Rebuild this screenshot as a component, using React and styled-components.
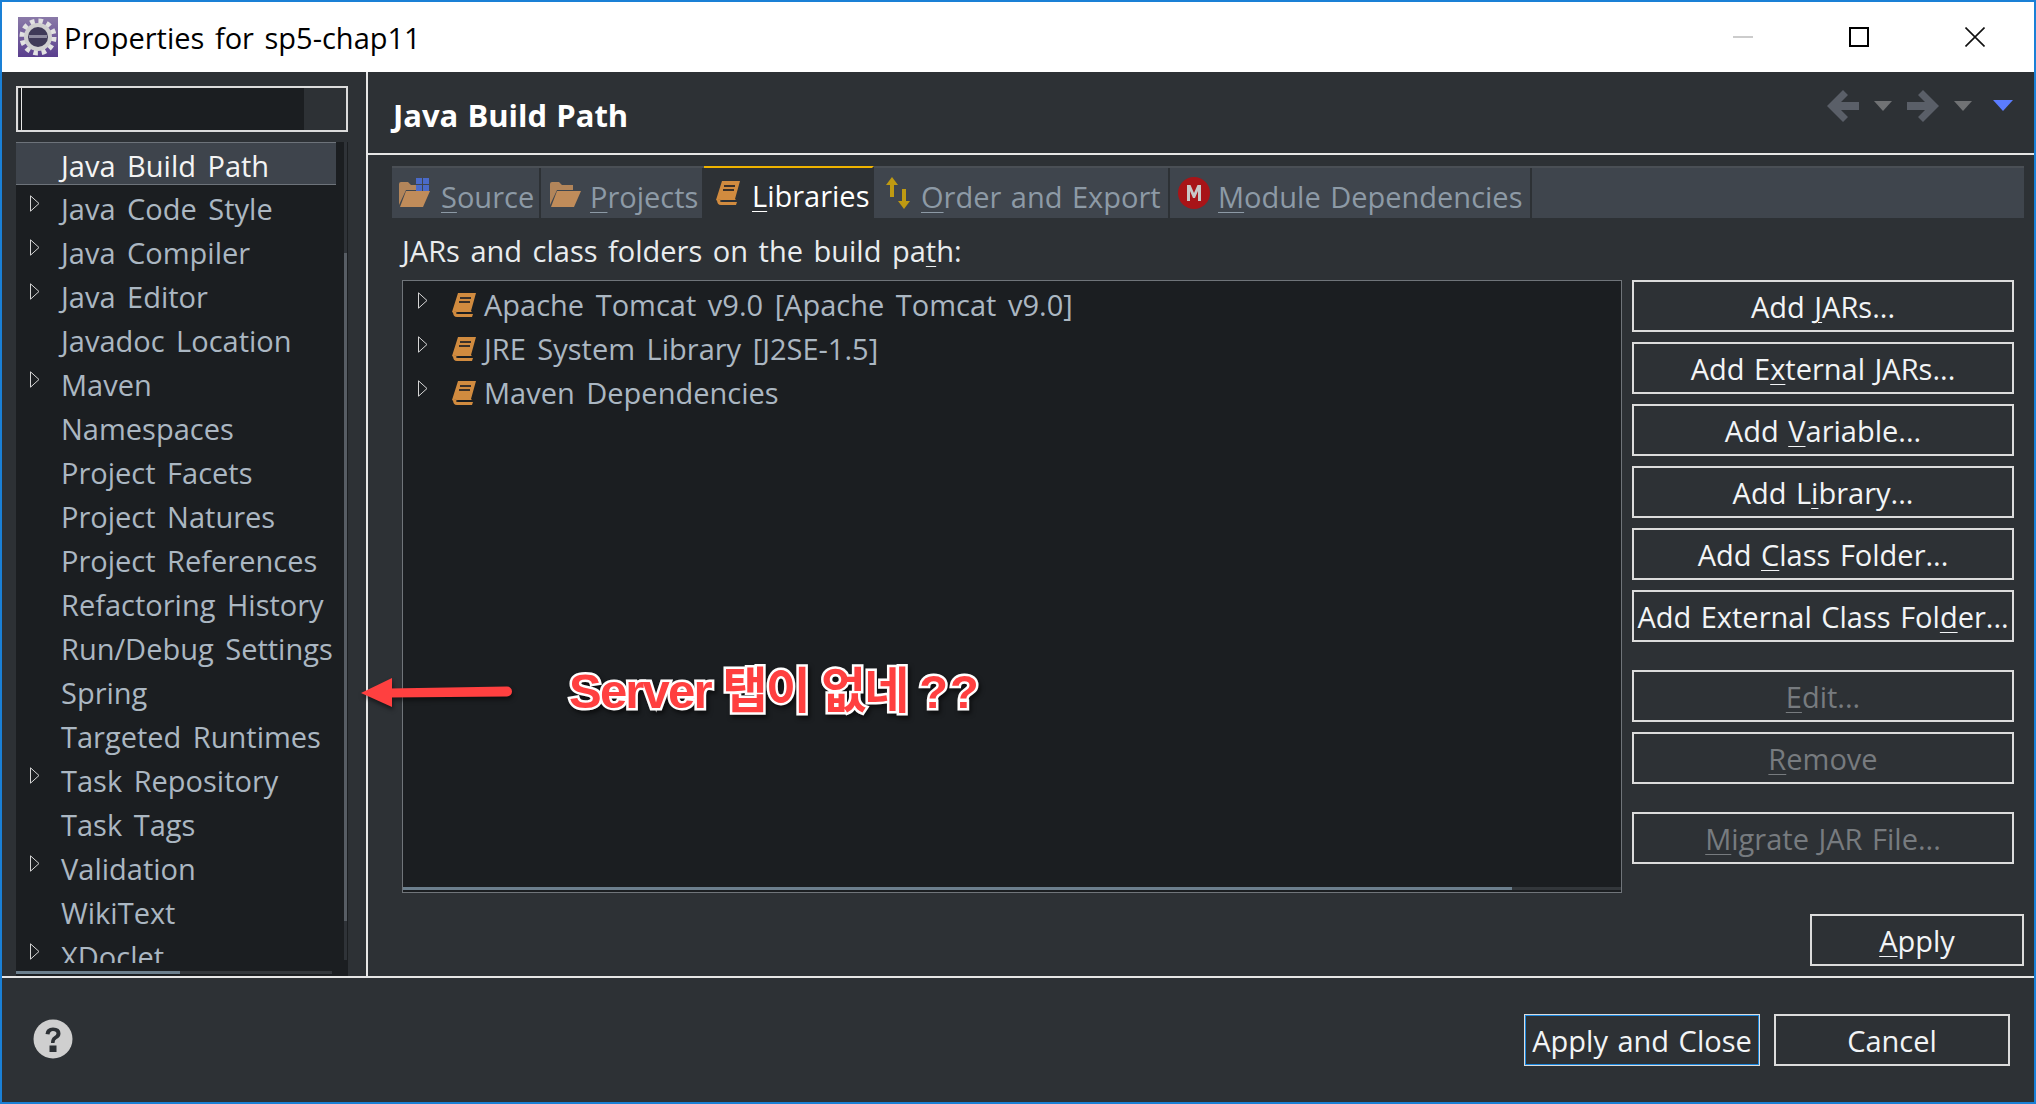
import React from 'react';
import styled, { createGlobalStyle } from 'styled-components';

const GlobalStyle = createGlobalStyle`
  html, body {
    margin: 0;
    padding: 0;
    background: #2d3135;
  }
  body {
    font-family: "Open Sans", "Noto Sans CJK KR", sans-serif;
    font-size: 29px;
  }
`;

const Window = styled.div`
  position: relative;
  box-sizing: border-box;
  width: 2036px;
  height: 1104px;
  border: 2px solid #1a80d6;
  background: #2d3135;
  display: flex;
  flex-direction: column;
  overflow: hidden;
`;

const TitleBar = styled.div`
  height: 70px;
  flex: none;
  background: #fff;
  display: flex;
  align-items: center;
  padding-left: 16px;
  color: #000;
`;

const TitleText = styled.div`
  margin-left: 6px;
  word-spacing: 3px;
`;

const WindowControls = styled.div`
  margin-left: auto;
  display: flex;
  align-items: center;
  margin-right: 49px;
  gap: 96px;
`;

const Main = styled.div`
  height: 904px;
  flex: none;
  display: flex;
  border-bottom: 2px solid #e6e6e6;
`;

const Sidebar = styled.div`
  box-sizing: border-box;
  width: 366px;
  flex: none;
  padding: 14px 0 0 14px;
  border-right: 2px solid #e6e6e6;
  display: flex;
  flex-direction: column;
`;

const SearchBox = styled.div`
  box-sizing: border-box;
  width: 332px;
  height: 46px;
  border: 2px solid #dcdcdc;
  display: flex;
  margin-bottom: 10px;
`;

const SearchInput = styled.div`
  width: 286px;
  background: #1b1e21;
  border-left: 1px solid #2d3135;
  box-sizing: border-box;
  padding-left: 2px;
  &::before {
    content: '';
    display: block;
    width: 1px;
    height: 100%;
    background: #e8e8e8;
  }
`;

const NavTree = styled.div`
  width: 332px;
  flex: 1;
  background: #1b1e21;
  display: grid;
  grid-template-columns: 320px 12px;
  grid-template-rows: 821px 13px;
`;

const NavRows = styled.div`
  overflow: hidden;
`;

const NavRow = styled.div`
  box-sizing: border-box;
  height: ${(p) => (p.$selected ? '43px' : '44px')};
  margin-bottom: ${(p) => (p.$selected ? '1px' : '0')};
  display: flex;
  align-items: center;
  padding-left: 14px;
  white-space: nowrap;
  color: ${(p) => (p.$selected ? '#f4f4f4' : '#abb7c2')};
  background: ${(p) => (p.$selected ? '#3e444c' : 'transparent')};
  border-top: ${(p) => (p.$selected ? '1px solid #6d737a' : 'none')};
  border-bottom: ${(p) => (p.$selected ? '1px solid #6d737a' : 'none')};
`;

const TwistySlot = styled.span`
  width: ${(p) => p.$width}px;
  flex: none;
  display: flex;
  align-items: center;
`;

const NavLabel = styled.span`
  margin-left: 1px;
  word-spacing: 4px;
  position: relative;
  top: ${(p) => (p.$selected ? '2px' : '0')};
`;

const VTrack = styled.div`
  grid-row: 1 / 2;
  grid-column: 2;
  width: 3px;
  margin-left: 8px;
  height: 818px;
  background: #2f3338;
  &::after {
    content: '';
    display: block;
    width: 3px;
    height: 668px;
    margin-top: 111px;
    background: #575d64;
  }
`;

const HTrack = styled.div`
  grid-row: 2;
  grid-column: 1;
  width: 316px;
  height: 3px;
  margin-top: 8px;
  background: #33373b;
  &::after {
    content: '';
    display: block;
    width: 164px;
    height: 3px;
    background: #6c7f8d;
  }
`;

const Content = styled.div`
  flex: 1;
  min-width: 0;
  display: flex;
  flex-direction: column;
`;

const PageHeader = styled.div`
  box-sizing: border-box;
  height: 83px;
  flex: none;
  border-bottom: 2px solid #e6e6e6;
  display: flex;
  align-items: center;
  padding: 0 21px 0 25px;
`;

const PageTitle = styled.h2`
  margin: 4px 0 0;
  font-size: 31px;
  font-weight: 700;
  color: #fff;
  word-spacing: 1px;
`;

const HistoryBar = styled.div`
  margin-left: auto;
  margin-bottom: 14px;
  display: flex;
  align-items: center;
`;

const TabStrip = styled.div`
  margin: 11px 10px 0 24px;
  height: 52px;
  flex: none;
  background: #3f454d;
  border-top: 2px solid #4a4f55;
  box-sizing: border-box;
  display: flex;
`;

const Tab = styled.div`
  box-sizing: border-box;
  height: ${(p) => (p.$active ? '52px' : '50px')};
  margin-top: ${(p) => (p.$active ? '-2px' : '0')};
  width: ${(p) => p.$width}px;
  flex: none;
  display: flex;
  align-items: center;
  padding-left: ${(p) => p.$pad}px;
  white-space: nowrap;
  color: ${(p) => (p.$active ? '#fff' : '#8d9aa6')};
  background: ${(p) => (p.$active ? '#2d3135' : 'transparent')};
  border-top: ${(p) => (p.$active ? '2px solid #f0b400' : 'none')};
  border-right: 2px solid #2d3135;
`;

const TabLabel = styled.span`
  margin-left: ${(p) => p.$gap}px;
  word-spacing: 2px;
  position: relative;
  top: ${(p) => (p.$active ? '2px' : '3px')};
`;

const Key = styled.span`
  text-decoration: underline;
  text-decoration-thickness: 1px;
  text-underline-offset: 4px;
`;

const Caption = styled.div`
  margin: 7px 0 0 34px;
  height: 50px;
  flex: none;
  display: flex;
  align-items: center;
  color: #e9ecee;
  word-spacing: 3px;
`;

const Body = styled.div`
  display: flex;
  margin: 5px 0 0 34px;
  height: 613px;
  flex: none;
  gap: 10px;
`;

const LibTree = styled.div`
  box-sizing: border-box;
  width: 1220px;
  height: 613px;
  flex: none;
  background: #1b1e21;
  border: 1px solid #70757a;
  padding-top: 2px;
  display: flex;
  flex-direction: column;
`;

const LibRow = styled.div`
  height: 44px;
  flex: none;
  display: flex;
  align-items: center;
  padding-left: 15px;
  color: #abb7c2;
  white-space: nowrap;
`;

const LibLabel = styled.span`
  margin-left: 7px;
  word-spacing: 4px;
  position: relative;
  top: -1px;
`;

const LibScroll = styled.div`
  margin-top: auto;
  height: 3px;
  margin-bottom: 2px;
  background: #33373b;
  &::after {
    content: '';
    display: block;
    width: 1109px;
    height: 3px;
    background: #6c7f8d;
  }
`;

const ButtonColumn = styled.div`
  width: 382px;
  display: flex;
  flex-direction: column;
  gap: 10px;
`;

const ActionButton = styled.div`
  box-sizing: border-box;
  height: 52px;
  flex: none;
  width: ${(p) => (p.$width ? `${p.$width}px` : 'auto')};
  margin-top: ${(p) => (p.$spaced ? '18px' : '0')};
  border: 2px solid #dcdcdc;
  color: ${(p) => (p.$disabled ? '#777b7f' : '#f2f4f6')};
  text-align: center;
  line-height: 49px;
  white-space: nowrap;
  word-spacing: 2px;
  ${(p) =>
    p.$focused &&
    `border: 1px solid #dcdcdc; box-shadow: inset 0 0 0 1px #1a86dc; line-height: 51px;`}
`;

const ApplyRow = styled.div`
  display: flex;
  justify-content: flex-end;
  margin: 21px 10px 0 0;
`;

const Footer = styled.div`
  flex: 1;
  display: flex;
  align-items: center;
  padding: 0 24px 0 31px;
  gap: 14px;
`;

const HelpSlot = styled.div`
  display: flex;
  margin-bottom: 2px;
`;

const FooterSpacer = styled.div`
  flex: 1;
`;

const Annotation = styled.div`
  position: absolute;
  left: 357px;
  top: 654px;
  display: flex;
  align-items: center;
  gap: 54px;
`;

const AnnotationText = styled.div`
  font-family: "Liberation Sans", "Noto Sans CJK KR", sans-serif;
  font-size: 49px;
  font-weight: 700;
  line-height: 70px;
  letter-spacing: -1.8px;
  color: #ff4040;
  -webkit-text-stroke: 5px #fff;
  paint-order: stroke fill;
  filter: drop-shadow(2px 3px 2px rgba(0, 0, 0, 0.55));
  white-space: nowrap;
`;

const Marks = styled.span`
  letter-spacing: 2px;
  font-size: 47px;
`;

const Twisty = () => (
  <svg width="10" height="17" viewBox="0 0 10 17" style={{ marginBottom: 10 }}>
    <path d="M0.5 0.8 L9 8.5 L0.5 16.2 Z" fill="none" stroke="#d5d5d5" strokeWidth="1" />
  </svg>
);

const BookIcon = ({ size = 26 }) => (
  <svg width={size} height={size} viewBox="0 0 26 26">
    <path d="M7 1 H25 L20 19 H6 Q3 19 2.5 21 L1 20 Z" fill="#d18b3f" />
    <path d="M2 20 Q2 25 6 25 H21 L22 22 H7 Q5 22 5 21 Q5 20 7 20 H21 L20 19 H6 Q3 19 2 20 Z" fill="#d18b3f" />
    <path d="M9 6 H20 M8 10 H19" stroke="#3a3029" strokeWidth="2" />
  </svg>
);

const FolderIcon = ({ grid }) => (
  <svg width="32" height="30" viewBox="0 0 32 30">
    <path d="M1 6 Q1 4 3 4 H10 L13 7 H24 V12 H8 L1 27 Z" fill="#b2855a" />
    <path d="M8 13 H32 L25 29 H2 Z" fill="#c08c5a" />
    {grid && (
      <g fill="#4a6ac8">
        <rect x="18" y="0" width="6" height="6" />
        <rect x="25" y="0" width="6" height="6" />
        <rect x="18" y="7" width="6" height="6" />
        <rect x="25" y="7" width="6" height="6" />
      </g>
    )}
  </svg>
);

const OrderIcon = () => (
  <svg width="24" height="34" viewBox="0 0 24 34">
    <path d="M6 1 L12 9 H8 V21 H4 V9 H0 Z" fill="#bf9a12" />
    <path d="M18 33 L24 25 H20 V13 H16 V25 H12 Z" fill="#bf9a12" />
  </svg>
);

const MavenBadge = () => (
  <svg width="32" height="32" viewBox="0 0 32 32">
    <circle cx="16" cy="16" r="16" fill="#a81418" />
    <path d="M9 24 V8 H12.5 L16 16 L19.5 8 H23 V24 H20 V14 L17 21 H15 L12 14 V24 Z" fill="#c8c8c8" />
  </svg>
);

const GearLogo = () => (
  <svg width="40" height="40" viewBox="0 0 40 40">
    <defs>
      <linearGradient id="logoBack" x1="0" y1="0" x2="0" y2="1">
        <stop offset="0" stopColor="#8a7aa8" />
        <stop offset="1" stopColor="#5a3f8e" />
      </linearGradient>
    </defs>
    <rect width="40" height="40" fill="url(#logoBack)" />
    <circle cx="20" cy="20" r="15" fill="none" stroke="#e2e2e2" strokeWidth="7" strokeDasharray="4.2 3.65" />
    <circle cx="20" cy="20" r="14" fill="#cfcfcf" />
    <circle cx="20" cy="20" r="10" fill="#3f3a58" />
    <rect x="11" y="18" width="18" height="3" fill="#8d8a9e" />
  </svg>
);

const Arrow = () => (
  <svg width="156" height="44" viewBox="0 0 156 44" style={{ overflow: 'visible' }}>
    <g fill="#ff4040" style={{ filter: 'drop-shadow(1px 3px 2px rgba(0,0,0,0.5))' }}>
      <path d="M2 23 L33 8 V37 Z" />
      <path d="M30 18.5 L148 16.5 A5 5 0 0 1 148 26.5 L30 27.5 Z" />
    </g>
  </svg>
);

const HelpIcon = () => (
  <svg width="40" height="40" viewBox="0 0 40 40">
    <circle cx="20" cy="20" r="19.5" fill="#cfcfcf" />
    <path d="M12.5 15 Q13 8.5 20 8.5 Q27.5 8.5 27.5 14.5 Q27.5 18 23.5 20 Q21.5 21 21.5 24 H18 Q18 19 21 17.5 Q23.5 16 23.5 14.5 Q23.5 12 20 12 Q17 12 16.5 15.5 Z" fill="#2d3135" />
    <rect x="16.5" y="26.5" width="7" height="6.5" fill="#2d3135" />
  </svg>
);

const navItems = [
  ['Java Build Path', false],
  ['Java Code Style', true],
  ['Java Compiler', true],
  ['Java Editor', true],
  ['Javadoc Location', false],
  ['Maven', true],
  ['Namespaces', false],
  ['Project Facets', false],
  ['Project Natures', false],
  ['Project References', false],
  ['Refactoring History', false],
  ['Run/Debug Settings', false],
  ['Spring', false],
  ['Targeted Runtimes', false],
  ['Task Repository', true],
  ['Task Tags', false],
  ['Validation', true],
  ['WikiText', false],
  ['XDoclet', true],
];

const libraries = [
  'Apache Tomcat v9.0 [Apache Tomcat v9.0]',
  'JRE System Library [J2SE-1.5]',
  'Maven Dependencies',
];

export default function App() {
  return (
    <Window>
      <GlobalStyle />
      <TitleBar>
        <GearLogo />
        <TitleText>Properties for sp5-chap11</TitleText>
        <WindowControls>
          <svg width="20" height="2"><rect width="20" height="2" fill="#cccccc" /></svg>
          <svg width="20" height="20"><rect x="1" y="1" width="18" height="18" fill="none" stroke="#000" strokeWidth="2" /></svg>
          <svg width="20" height="20"><path d="M0.5 0.5 L19.5 19.5 M19.5 0.5 L0.5 19.5" stroke="#111" strokeWidth="1.6" /></svg>
        </WindowControls>
      </TitleBar>

      <Main>
        <Sidebar>
          <SearchBox>
            <SearchInput />
          </SearchBox>
          <NavTree>
            <NavRows>
              {navItems.map(([name, branch], i) => (
                <NavRow key={name} $selected={i === 0}>
                  <TwistySlot $width={30}>{branch && <Twisty />}</TwistySlot>
                  <NavLabel $selected={i === 0}>{name}</NavLabel>
                </NavRow>
              ))}
            </NavRows>
            <VTrack />
            <HTrack />
          </NavTree>
        </Sidebar>

        <Content>
          <PageHeader>
            <PageTitle>Java Build Path</PageTitle>
            <HistoryBar>
              <svg width="32" height="32" viewBox="0 0 32 32"><path d="M16 0 L0 16 L16 32 L21 27 L14 20 H32 V12 H14 L21 5 Z" fill="#5a5f68" /></svg>
              <svg width="18" height="10" viewBox="0 0 18 10" style={{ marginLeft: 15 }}><path d="M0 0 H18 L9 10 Z" fill="#707274" /></svg>
              <svg width="32" height="32" viewBox="0 0 32 32" style={{ marginLeft: 15 }}><path d="M16 0 L32 16 L16 32 L11 27 L18 20 H0 V12 H18 L11 5 Z" fill="#5a5f68" /></svg>
              <svg width="18" height="10" viewBox="0 0 18 10" style={{ marginLeft: 15 }}><path d="M0 0 H18 L9 10 Z" fill="#707274" /></svg>
              <svg width="20" height="11" viewBox="0 0 20 11" style={{ marginLeft: 21 }}><path d="M0 0 H20 L10 11 Z" fill="#5b7cff" /></svg>
            </HistoryBar>
          </PageHeader>

          <TabStrip>
            <Tab $width={149} $pad={6}>
              <FolderIcon grid />
              <TabLabel $gap={11}><Key>S</Key>ource</TabLabel>
            </Tab>
            <Tab $width={163} $pad={8}>
              <FolderIcon />
              <TabLabel $gap={9}><Key>P</Key>rojects</TabLabel>
            </Tab>
            <Tab $width={170} $pad={11} $active>
              <BookIcon />
              <TabLabel $gap={11} $active><Key>L</Key>ibraries</TabLabel>
            </Tab>
            <Tab $width={296} $pad={12}>
              <OrderIcon />
              <TabLabel $gap={11}><Key>O</Key>rder and Export</TabLabel>
            </Tab>
            <Tab $width={362} $pad={8}>
              <MavenBadge />
              <TabLabel $gap={8}><Key>M</Key>odule Dependencies</TabLabel>
            </Tab>
          </TabStrip>

          <Caption>
            <span>JARs and class folders on the build pa<Key>t</Key>h:</span>
          </Caption>

          <Body>
            <LibTree>
              {libraries.map((name) => (
                <LibRow key={name}>
                  <TwistySlot $width={33}><Twisty /></TwistySlot>
                  <BookIcon />
                  <LibLabel>{name}</LibLabel>
                </LibRow>
              ))}
              <LibScroll />
            </LibTree>
            <ButtonColumn>
              <ActionButton>Add <Key>J</Key>ARs...</ActionButton>
              <ActionButton>Add E<Key>x</Key>ternal JARs...</ActionButton>
              <ActionButton>Add <Key>V</Key>ariable...</ActionButton>
              <ActionButton>Add L<Key>i</Key>brary...</ActionButton>
              <ActionButton>Add <Key>C</Key>lass Folder...</ActionButton>
              <ActionButton>Add External Class Fol<Key>d</Key>er...</ActionButton>
              <ActionButton $disabled $spaced><Key>E</Key>dit...</ActionButton>
              <ActionButton $disabled><Key>R</Key>emove</ActionButton>
              <ActionButton $disabled $spaced><Key>M</Key>igrate JAR File...</ActionButton>
            </ButtonColumn>
          </Body>

          <ApplyRow>
            <ActionButton $width={214}><Key>A</Key>pply</ActionButton>
          </ApplyRow>
        </Content>
      </Main>

      <Footer>
        <HelpSlot><HelpIcon /></HelpSlot>
        <FooterSpacer />
        <ActionButton $width={236} $focused>Apply and Close</ActionButton>
        <ActionButton $width={236}>Cancel</ActionButton>
      </Footer>

      <Annotation>
        <Arrow />
        <AnnotationText>Server 탭이 없네 <Marks>??</Marks></AnnotationText>
      </Annotation>
    </Window>
  );
}
